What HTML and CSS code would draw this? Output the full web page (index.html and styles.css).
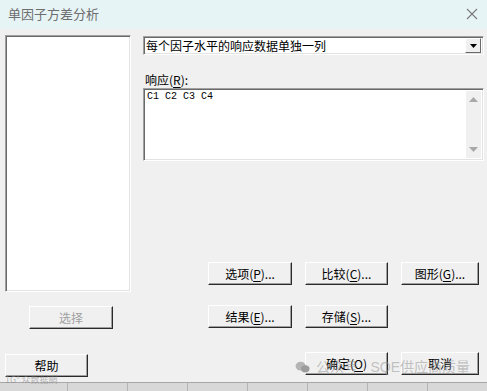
FILE: index.html
```html
<!DOCTYPE html>
<html lang="zh">
<head>
  <meta charset="UTF-8" />
  <title>单因子方差分析</title>
  <link rel="stylesheet" href="styles.css">
</head>
<body>
  <div class="dialog">
    <div class="titlebar">
      <span class="title">单因子方差分析</span>
      <svg class="close" width="12" height="12" viewBox="0 0 12 12">
        <path d="M1 1L11 11M11 1L1 11" stroke="#7a7a7a" stroke-width="1.1" fill="none"/>
      </svg>
    </div>

    <div class="content">
      <div class="left">
        <div class="listbox"></div>
        <button class="btn select" disabled>选择</button>
        <button class="btn help">帮助</button>
      </div>

      <div class="right">
        <div class="combo">
          <span class="combo-text">每个因子水平的响应数据单独一列</span>
          <span class="combo-arrow">
            <svg width="7" height="4" viewBox="0 0 7 4"><path d="M0 0H7L3.5 4Z" fill="#000"/></svg>
          </span>
        </div>
        <div class="label">响应(<u>R</u>):</div>
        <div class="textbox">
          <span class="cols">C1 C2 C3 C4</span>
          <div class="scrollbar">
            <svg width="9" height="5" viewBox="0 0 9 5"><path d="M0 5H9L4.5 0Z" fill="#a8a8a8"/></svg>
            <svg width="9" height="5" viewBox="0 0 9 5"><path d="M0 0H9L4.5 5Z" fill="#a8a8a8"/></svg>
          </div>
        </div>

        <div class="buttons">
          <button class="btn">选项(<u>P</u>)...</button>
          <button class="btn">比较(<u>C</u>)...</button>
          <button class="btn">图形(<u>G</u>)...</button>
          <button class="btn">结果(<u>E</u>)...</button>
          <button class="btn">存储(<u>S</u>)...</button>
          <button class="btn ok">确定(<u>O</u>)</button>
          <button class="btn">取消</button>
        </div>
      </div>
    </div>

    <div class="sheet">
      <span></span><span></span><span></span><span></span><span></span><span></span><span></span>
    </div>

    <div class="watermark">
      <svg width="15" height="12" viewBox="0 0 16 13">
        <ellipse cx="6" cy="5.5" rx="5.5" ry="4.8" fill="#b4b4b4"/>
        <ellipse cx="11" cy="8.5" rx="4.6" ry="4" fill="#9c9c9c"/>
      </svg>
      <span>公众号 · SQE供应商质量</span>
    </div>
    <div class="watermark-left">1G° 众数据網</div>
  </div>
</body>
</html>
```

FILE: styles.css
```css
* {
  box-sizing: border-box;
}
body {
  margin: 0;
  background: #f0f0f0;
  font-family: "Noto Sans CJK SC", "Liberation Sans", sans-serif;
  font-size: 12px;
  color: #000;
}
.dialog {
  position: relative;
  width: 487px;
  height: 391px;
  overflow: hidden;
  background: #f0f0f0;
}
.titlebar {
  height: 29px;
  background: #e7f4f6;
  display: flex;
  align-items: center;
  justify-content: space-between;
  padding: 0 8px 2px 8px;
}
.title {
  font-size: 13px;
  color: #6e6e6e;
}
.close {
  margin-right: 1px;
}
.content {
  display: flex;
  height: 353px;
  padding-top: 6px;
}
.left {
  width: 143px;
  flex-shrink: 0;
  padding-left: 5px;
  display: flex;
  flex-direction: column;
}
.listbox {
  width: 126px;
  height: 257px;
  background: #fff;
  border: 1px solid;
  border-color: #a0a0a0 #fff #fff #a0a0a0;
  box-shadow: inset 1px 1px 0 #696969, inset -1px -1px 0 #e3e3e3;
}
.btn {
  height: 23px;
  padding: 0;
  font-family: "Noto Sans CJK SC", "Liberation Sans", sans-serif;
  font-size: 12px;
  color: #000;
  background: #f0f0f0;
  border: 1px solid;
  border-color: #fff #2a2a2a #2a2a2a #fff;
  box-shadow: inset -1px -1px 0 #a0a0a0;
  line-height: 20px;
}
.btn u {
  text-decoration-thickness: 1px;
  text-underline-offset: 2px;
}
.btn:disabled {
  color: #a0a0a0;
}
.select {
  width: 84px;
  margin: 14px 0 0 24px;
}
.help {
  width: 83px;
  margin-top: 25px;
}
.right {
  width: 341px;
  padding-top: 1px;
}
.combo {
  height: 19px;
  display: flex;
  align-items: center;
  background: #fff;
  border: 1px solid;
  border-color: #a0a0a0 #fff #fff #a0a0a0;
  box-shadow: inset 1px 1px 0 #696969, inset -1px -1px 0 #e3e3e3;
  padding: 0 2px;
}
.combo-text {
  flex: 1;
  line-height: 16px;
}
.combo-arrow {
  width: 16px;
  height: 15px;
  display: flex;
  align-items: center;
  justify-content: center;
  background: #f0f0f0;
  border: 1px solid;
  border-color: #fff #696969 #696969 #fff;
}
.label {
  margin-top: 19px;
  height: 14px;
  line-height: 12px;
  padding-left: 2px;
}
.label u {
  text-underline-offset: 2px;
}
.textbox {
  height: 73px;
  display: flex;
  background: #fff;
  border: 1px solid;
  border-color: #a0a0a0 #fff #fff #a0a0a0;
  box-shadow: inset 1px 1px 0 #696969, inset -1px -1px 0 #e3e3e3;
  padding: 2px;
}
.cols {
  flex: 1;
  font-family: "Liberation Mono", monospace;
  font-size: 10px;
  line-height: 12px;
  padding-left: 1px;
}
.scrollbar {
  width: 15px;
  background: #f0f0f0;
  display: flex;
  flex-direction: column;
  justify-content: space-between;
  align-items: center;
  padding: 6px 0;
}
.buttons {
  display: grid;
  grid-template-columns: 84px 83px 78px;
  column-gap: 13px;
  row-gap: 20px;
  margin: 101px 0 0 65px;
}
.buttons .ok {
  grid-column: 2;
  margin-top: 4px;
}
.buttons .ok + .btn {
  margin-top: 4px;
}
.sheet {
  height: 9px;
  background: #d8d8d8;
  border-top: 1px solid #a8a8a8;
  display: flex;
  padding-left: 67px;
}
.sheet span {
  width: 72px;
  border-left: 1px solid #b4b4b4;
}
.watermark {
  position: absolute;
  left: 295px;
  top: 357px;
  display: flex;
  align-items: center;
  gap: 6px;
  white-space: nowrap;
  font-size: 14px;
  line-height: 20px;
  color: rgba(150, 150, 150, 0.55);
  font-family: "Liberation Sans", "Noto Sans CJK SC", sans-serif;
}
.watermark-left {
  position: absolute;
  left: 5px;
  top: 375px;
  white-space: nowrap;
  font-size: 9px;
  line-height: 10px;
  color: rgba(140, 140, 140, 0.6);
}
```
